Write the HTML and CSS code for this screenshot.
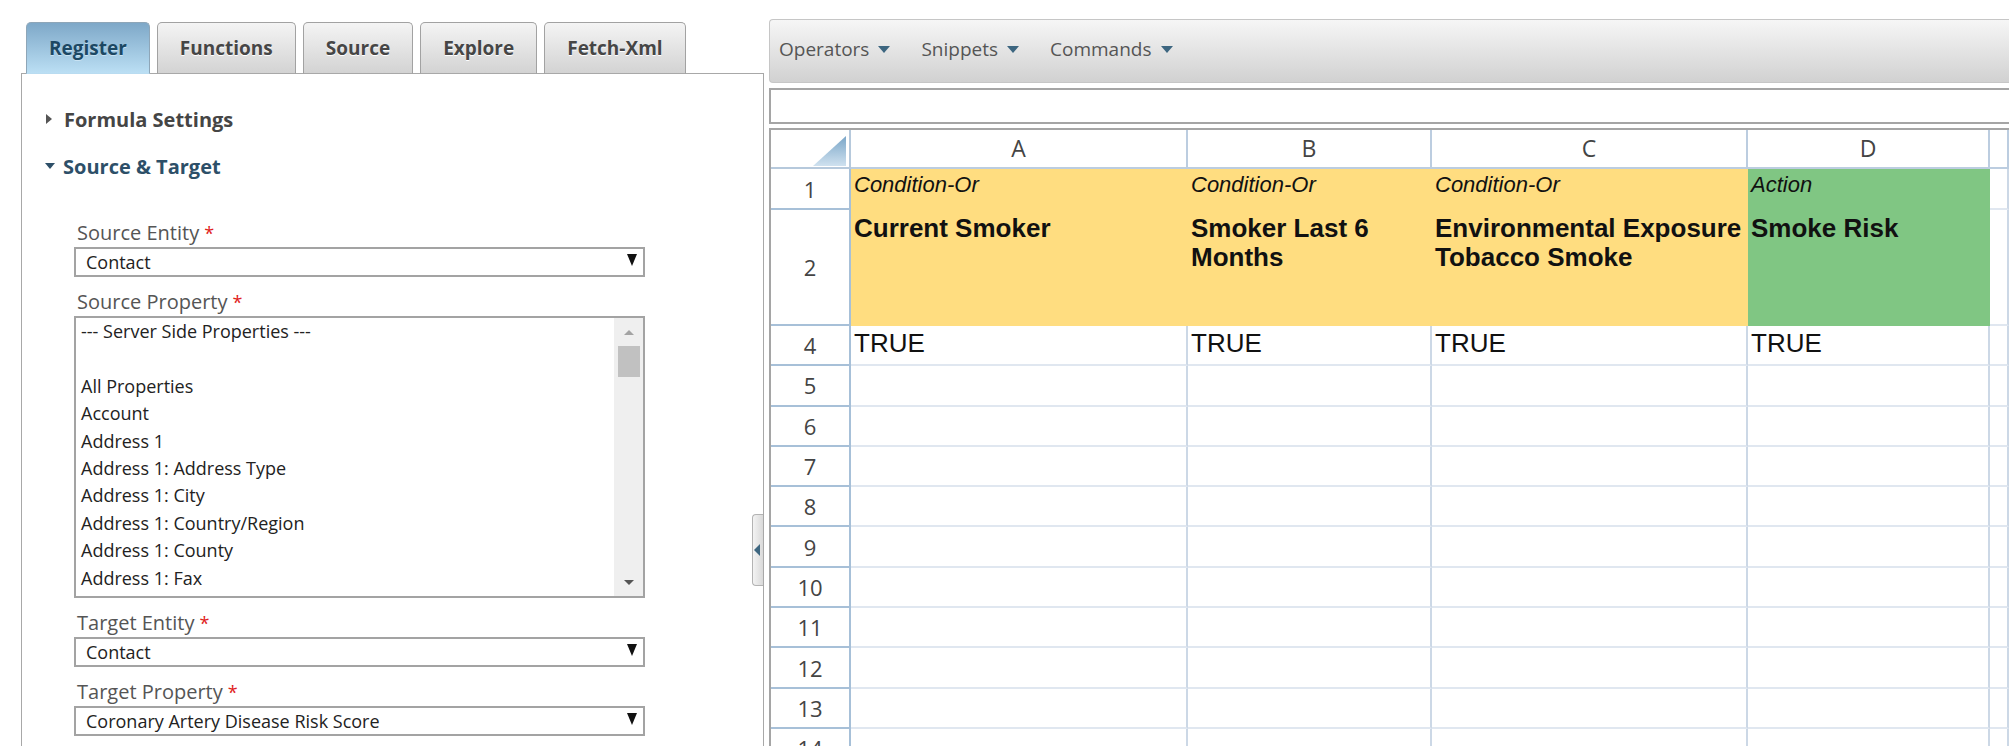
FILE: index.html
```html
<!DOCTYPE html>
<html>
<head>
    <link rel="stylesheet" href="styles.css">
</head>
<body>
    <div class="app">
        <div class="left">
            <div class="tabs">
                <div class="tab active">Register</div>
                <div class="tab">Functions</div>
                <div class="tab">Source</div>
                <div class="tab">Explore</div>
                <div class="tab">Fetch-Xml</div>
            </div>
            <div class="panel">
                <div class="section-head">
                    <span class="caret caret-right"></span>Formula Settings
                </div>
                <div class="section-head open">
                    <span class="caret caret-down"></span>Source &amp; Target
                </div>
                <div class="fields">
                    <div class="field-label">Source Entity<span class="req">*</span></div>
                    <div class="select"><span>Contact</span><span class="select-arrow"></span></div>

                    <div class="field-label">Source Property<span class="req">*</span></div>
                    <div class="listbox">
                        <div class="listbox-items">
                            <div>--- Server Side Properties ---</div>
                            <div>&nbsp;</div>
                            <div>All Properties</div>
                            <div>Account</div>
                            <div>Address 1</div>
                            <div>Address 1: Address Type</div>
                            <div>Address 1: City</div>
                            <div>Address 1: Country/Region</div>
                            <div>Address 1: County</div>
                            <div>Address 1: Fax</div>
                        </div>
                        <div class="scrollbar">
                            <div class="sb-btn"><span class="sb-up"></span></div>
                            <div class="sb-thumb"></div>
                            <div class="sb-track"></div>
                            <div class="sb-btn"><span class="sb-down"></span></div>
                        </div>
                    </div>

                    <div class="field-label">Target Entity<span class="req">*</span></div>
                    <div class="select"><span>Contact</span><span class="select-arrow"></span></div>

                    <div class="field-label">Target Property<span class="req">*</span></div>
                    <div class="select"><span>Coronary Artery Disease Risk Score</span><span class="select-arrow"></span></div>
                </div>
                <div class="splitter-handle"><span class="handle-arrow"></span></div>
            </div>
        </div>

        <div class="right">
            <div class="toolbar">
                <div class="menu">Operators<span class="menu-arrow"></span></div>
                <div class="menu">Snippets<span class="menu-arrow"></span></div>
                <div class="menu">Commands<span class="menu-arrow"></span></div>
            </div>
            <div class="formula-bar"></div>

            <div class="sheet">
                <div class="row head">
                    <div class="corner">
                        <svg width="33" height="30" viewBox="0 0 33 30">
                            <defs>
                                <linearGradient id="cornerGrad" x1="0" y1="0" x2="0" y2="1">
                                    <stop offset="0" stop-color="#7aa6c8"/>
                                    <stop offset="1" stop-color="#cfe1ef"/>
                                </linearGradient>
                            </defs>
                            <polygon points="33,0 33,30 0,30" fill="url(#cornerGrad)"/>
                        </svg>
                    </div>
                    <div class="ch">A</div>
                    <div class="ch">B</div>
                    <div class="ch">C</div>
                    <div class="ch">D</div>
                    <div class="ch"></div>
                </div>
                <div class="row r1">
                    <div class="rh">1</div>
                    <div class="c cond type">Condition-Or</div>
                    <div class="c cond type">Condition-Or</div>
                    <div class="c cond type">Condition-Or</div>
                    <div class="c action type">Action</div>
                    <div class="c"></div>
                </div>
                <div class="row r2">
                    <div class="rh">2</div>
                    <div class="c cond title">Current Smoker</div>
                    <div class="c cond title">Smoker Last 6 Months</div>
                    <div class="c cond title">Environmental Exposure Tobacco Smoke</div>
                    <div class="c action title">Smoke Risk</div>
                    <div class="c"></div>
                </div>
                <div class="row">
                    <div class="rh">4</div>
                    <div class="c val">TRUE</div>
                    <div class="c val">TRUE</div>
                    <div class="c val">TRUE</div>
                    <div class="c val">TRUE</div>
                    <div class="c"></div>
                </div>
                <div class="row"><div class="rh">5</div><div class="c"></div><div class="c"></div><div class="c"></div><div class="c"></div><div class="c"></div></div>
                <div class="row"><div class="rh">6</div><div class="c"></div><div class="c"></div><div class="c"></div><div class="c"></div><div class="c"></div></div>
                <div class="row"><div class="rh">7</div><div class="c"></div><div class="c"></div><div class="c"></div><div class="c"></div><div class="c"></div></div>
                <div class="row"><div class="rh">8</div><div class="c"></div><div class="c"></div><div class="c"></div><div class="c"></div><div class="c"></div></div>
                <div class="row"><div class="rh">9</div><div class="c"></div><div class="c"></div><div class="c"></div><div class="c"></div><div class="c"></div></div>
                <div class="row"><div class="rh">10</div><div class="c"></div><div class="c"></div><div class="c"></div><div class="c"></div><div class="c"></div></div>
                <div class="row"><div class="rh">11</div><div class="c"></div><div class="c"></div><div class="c"></div><div class="c"></div><div class="c"></div></div>
                <div class="row"><div class="rh">12</div><div class="c"></div><div class="c"></div><div class="c"></div><div class="c"></div><div class="c"></div></div>
                <div class="row"><div class="rh">13</div><div class="c"></div><div class="c"></div><div class="c"></div><div class="c"></div><div class="c"></div></div>
                <div class="row"><div class="rh">14</div><div class="c"></div><div class="c"></div><div class="c"></div><div class="c"></div><div class="c"></div></div>
            </div>
        </div>
    </div>
</body>
</html>
```

FILE: styles.css
```css
body {
    margin: 0;
    background: #fff;
    font-family: "Open Sans", "Noto Sans", sans-serif;
    overflow: hidden;
    height: 746px;
}

.app {
    display: flex;
    align-items: flex-start;
}

/* left side: tabs + register panel */

.left {
    flex: none;
    width: 743px;
    margin-left: 21px;
    padding-top: 22px;
}

.tabs {
    display: flex;
    gap: 7px;
    padding-left: 5px;
    height: 51px;
    position: relative;
    z-index: 1;
}

.tab {
    box-sizing: border-box;
    height: 52px;
    padding: 0 22px;
    line-height: 50px;
    font-size: 19px;
    font-weight: bold;
    color: #464646;
    text-shadow: 0 1px 0 #fff;
    border: 1px solid #a2a2a2;
    border-bottom-color: #a8a8a8;
    border-radius: 5px 5px 0 0;
    background: linear-gradient(#f4f4f4, #d3d3d3);
}

.tab.active {
    color: #1c4864;
    text-shadow: 0 1px 0 #c9e3f3;
    border-color: #8ea6b8;
    border-bottom-color: #b9dcf1;
    background: linear-gradient(#7ea8c8, #bbdff4);
}

.panel {
    position: relative;
    border: 1px solid #a8a8a8;
    border-bottom: none;
    height: 700px;
    padding: 32px 0 0 23px;
    box-sizing: border-box;
}

.section-head {
    display: flex;
    align-items: center;
    height: 26px;
    font-size: 20px;
    font-weight: bold;
    color: #454545;
}

.section-head.open {
    margin-top: 21px;
    color: #2d4f68;
}

.caret {
    display: inline-block;
    width: 0;
    height: 0;
}

.caret-right {
    border-top: 5px solid transparent;
    border-bottom: 5px solid transparent;
    border-left: 6px solid #555;
    margin-left: 1px;
    margin-right: 12px;
}

.caret-down {
    border-left: 5px solid transparent;
    border-right: 5px solid transparent;
    border-top: 6px solid #2d4f68;
    margin-right: 8px;
}

.fields {
    margin-top: 42px;
    padding-left: 29px;
}

.field-label {
    margin-top: 13px;
    padding-left: 3px;
    font-size: 20px;
    line-height: 24px;
    color: #555;
}

.field-label:first-child {
    margin-top: 0;
}

.req {
    color: #e02020;
    margin-left: 5px;
    font-size: 18px;
}

.select {
    margin-top: 2px;
    box-sizing: border-box;
    width: 571px;
    height: 30px;
    border: 2px solid #a3a3a3;
    display: flex;
    align-items: center;
    justify-content: space-between;
    padding: 0 6px 0 10px;
    font-size: 18px;
    color: #222;
}

.select-arrow {
    width: 0;
    height: 0;
    border-left: 5px solid transparent;
    border-right: 5px solid transparent;
    border-top: 12px solid #111;
    margin-top: -4px;
}

.listbox {
    margin-top: 2px;
    box-sizing: border-box;
    width: 571px;
    height: 282px;
    border: 2px solid #a3a3a3;
    display: flex;
}

.listbox-items {
    flex: 1;
    padding-left: 5px;
    font-size: 18px;
    line-height: 27.4px;
    color: #222;
    white-space: nowrap;
}

.scrollbar {
    width: 29px;
    background: #efefef;
    display: flex;
    flex-direction: column;
}

.sb-btn {
    height: 28px;
    display: flex;
    align-items: center;
    justify-content: center;
}

.sb-up {
    width: 0;
    height: 0;
    border-left: 5px solid transparent;
    border-right: 5px solid transparent;
    border-bottom: 5px solid #a3a3a3;
}

.sb-down {
    width: 0;
    height: 0;
    border-left: 5px solid transparent;
    border-right: 5px solid transparent;
    border-top: 5px solid #555;
}

.sb-thumb {
    height: 31px;
    margin: 0 3px 0 4px;
    background: #c1c1c1;
}

.sb-track {
    flex: 1;
}

.splitter-handle {
    position: absolute;
    right: 0;
    top: 440px;
    width: 11px;
    height: 72px;
    box-sizing: border-box;
    border: 1px solid #b3b3b3;
    border-right: none;
    border-radius: 4px 0 0 4px;
    background: linear-gradient(to right, #f3f3f3, #d9d9d9);
    display: flex;
    align-items: center;
}

.handle-arrow {
    width: 0;
    height: 0;
    margin-left: 1px;
    border-top: 6px solid transparent;
    border-bottom: 6px solid transparent;
    border-right: 6px solid #3d6680;
}

/* right side: toolbar, formula bar, sheet */

.right {
    flex: 1;
    min-width: 0;
    margin-left: 5px;
    padding-top: 19px;
}

.toolbar {
    box-sizing: border-box;
    height: 64px;
    border: 1px solid #c6c6c6;
    border-right: none;
    border-radius: 4px 0 0 4px;
    background: linear-gradient(#f6f6f6, #d1d1d1);
    display: flex;
    align-items: center;
    padding-left: 9px;
    padding-bottom: 4px;
}

.menu {
    display: flex;
    align-items: center;
    font-size: 19px;
    color: #555;
    margin-right: 31px;
}

.menu-arrow {
    width: 0;
    height: 0;
    margin-left: 9px;
    border-left: 6px solid transparent;
    border-right: 6px solid transparent;
    border-top: 7px solid #3d6680;
}

.formula-bar {
    margin-top: 5px;
    box-sizing: border-box;
    height: 36px;
    border: 2px solid #a5a5a5;
    border-right: none;
    background: #fff;
}

.sheet {
    margin-top: 4px;
    border-top: 2px solid #a5a5a5;
    border-left: 2px solid #a5a5a5;
}

.row {
    display: grid;
    grid-template-columns: 80px 337px 244px 316px 242px 1fr;
    height: 40.3px;
}

.row.head {
    height: 39px;
}

.row.r1 {
    height: 41px;
}

.row.r2 {
    height: 116px;
}

.row > div {
    box-sizing: border-box;
    overflow: hidden;
}

.corner {
    display: flex;
    justify-content: flex-end;
    align-items: flex-end;
    padding: 0 3px 1px 0;
    border-right: 2px solid #b6c9dc;
    border-bottom: 2px solid #b6c9dc;
}

.ch {
    text-align: center;
    font-size: 23px;
    line-height: 37px;
    color: #444;
    border-right: 2px solid #bccde0;
    border-bottom: 2px solid #bccde0;
}

.rh {
    display: flex;
    align-items: center;
    justify-content: center;
    font-size: 22px;
    color: #444;
    border-right: 2px solid #a7c0d8;
    border-bottom: 2px solid #a7c0d8;
}

.c {
    font-family: "Liberation Sans", Arial, sans-serif;
    color: #111;
    padding: 0 4px 0 3px;
    border-right: 2px solid #ccd8e6;
    border-bottom: 2px solid #e0e7f0;
}

.c.cond {
    background: #ffdd80;
    border-color: #ffdd80;
}

.c.action {
    background: #80c683;
    border-color: #80c683;
}

.type {
    font-style: italic;
    font-size: 22px;
    line-height: 24px;
    padding-top: 4px;
}

.title {
    font-weight: bold;
    font-size: 26px;
    line-height: 29px;
    padding-top: 4px;
}

.val {
    font-size: 26px;
    line-height: 30px;
    padding-top: 2px;
}
```
